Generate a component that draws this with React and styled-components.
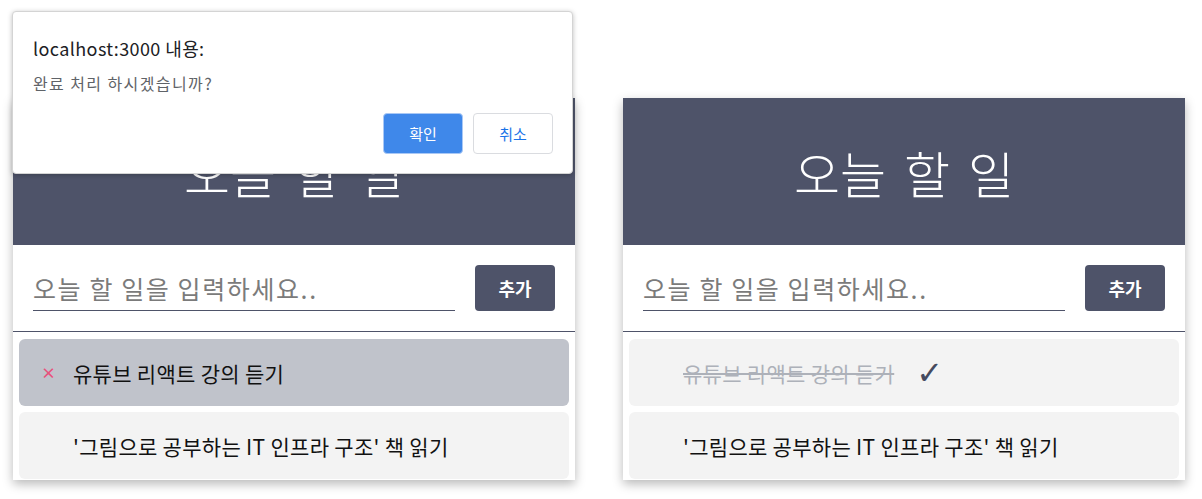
import React from 'react'
import styled, { createGlobalStyle } from 'styled-components'

const GlobalStyle = createGlobalStyle`
  body {
    margin: 0;
    background: #ffffff;
    font-family: "Noto Sans CJK KR", "Noto Sans", sans-serif;
  }
`;

const Page = styled.div`
  display: flex;
  align-items: flex-start;
  gap: 48px;
  padding: 98px 0 19px 13px;
`;

const Shot = styled.div`
  position: relative;
`;

const Card = styled.div`
  width: 562px;
  background: #ffffff;
  box-shadow: 0 4px 10px rgba(0, 0, 0, 0.28);
`;

const Header = styled.div`
  height: 147px;
  display: flex;
  align-items: center;
  justify-content: center;
  background: #4e5369;
  color: #ffffff;
  font-size: 50px;
  font-weight: 300;
  word-spacing: 7px;
`;

const Form = styled.form`
  display: flex;
  gap: 20px;
  padding: 20px;
  border-bottom: 1px solid #4e5369;
`;

const Input = styled.input`
  flex: 1;
  height: 46px;
  box-sizing: border-box;
  padding: 0;
  border: none;
  border-bottom: 1px solid #4e5369;
  outline: none;
  font-family: inherit;
  font-size: 25px;
  letter-spacing: 1.6px;
  color: #222;

  &::placeholder {
    color: #7b7b7b;
  }
`;

const AddButton = styled.button`
  width: 80px;
  height: 46px;
  border: none;
  border-radius: 4px;
  background: #4e5369;
  color: #ffffff;
  font-family: inherit;
  font-size: 18px;
  font-weight: 700;
`;

const List = styled.ul`
  list-style: none;
  margin: 0;
  box-sizing: border-box;
  height: 148px;
  overflow: hidden;
  padding: 7px 6px 0;
  display: flex;
  flex-direction: column;
  gap: 6px;
`;

const Item = styled.li`
  flex: none;
  height: 67px;
  display: flex;
  align-items: center;
  padding-left: 22px;
  border-radius: 6px;
  background: ${(p) => (p.$hover ? '#c0c3cb' : '#f3f3f3')};
`;

const Remove = styled.span`
  width: 32px;
  flex: none;
  color: #e8527c;
  font-size: 15px;
  font-weight: 700;
  line-height: 1;
`;

const Text = styled.span`
  font-size: 21px;
  letter-spacing: 0.3px;
  color: ${(p) => (p.$done ? '#adb1b9' : '#111111')};
  text-decoration: ${(p) => (p.$done ? 'line-through' : 'none')};
  text-decoration-thickness: 2px;
`;

const Check = styled.span`
  margin-left: 22px;
  font-family: "DejaVu Sans", sans-serif;
  font-size: 32px;
  color: #454a5e;
  line-height: 1;
`;

const Dialog = styled.div`
  position: absolute;
  top: -87px;
  left: -1px;
  width: 561px;
  box-sizing: border-box;
  padding: 23px 19px 19px 20px;
  background: #ffffff;
  border: 1px solid #d4d4d4;
  border-radius: 4px;
  box-shadow: 0 1px 5px rgba(0, 0, 0, 0.25);
`;

const DialogTitle = styled.div`
  font-size: 18px;
  letter-spacing: 0.4px;
  line-height: 26px;
  color: #202124;
`;

const DialogMessage = styled.div`
  margin-top: 12px;
  font-size: 16px;
  letter-spacing: 1.4px;
  line-height: 20px;
  color: #5f6368;
`;

const DialogActions = styled.div`
  display: flex;
  justify-content: flex-end;
  gap: 10px;
  margin-top: 20px;
`;

const DialogButton = styled.button`
  width: 80px;
  height: 41px;
  border-radius: 4px;
  font-family: inherit;
  font-size: 15px;
  border: 1px solid ${(p) => (p.$primary ? '#a9c8f5' : '#dadce0')};
  background: ${(p) => (p.$primary ? '#3f88ea' : '#ffffff')};
  color: ${(p) => (p.$primary ? '#ffffff' : '#1a73e8')};
`;

const TodoCard = ({ todos }) => (
  <Card>
    <Header>오늘 할 일</Header>
    <Form onSubmit={(e) => e.preventDefault()}>
      <Input placeholder="오늘 할 일을 입력하세요.." />
      <AddButton type="submit">추가</AddButton>
    </Form>
    <List>
      {todos.map((todo) => (
        <Item key={todo.id} $hover={todo.hover}>
          <Remove>{todo.hover ? '×' : ''}</Remove>
          <Text $done={todo.done}>{todo.text}</Text>
          {todo.done && <Check>✓</Check>}
        </Item>
      ))}
    </List>
  </Card>
);

const App = () => {
  const before = [
    { id: 1, text: '유튜브 리액트 강의 듣기', done: false, hover: true },
    { id: 2, text: "'그림으로 공부하는 IT 인프라 구조' 책 읽기", done: false },
  ];
  const after = [
    { id: 1, text: '유튜브 리액트 강의 듣기', done: true },
    { id: 2, text: "'그림으로 공부하는 IT 인프라 구조' 책 읽기", done: false },
  ];

  return (
    <>
      <GlobalStyle />
      <Page>
        <Shot>
          <TodoCard todos={before} />
          <Dialog>
            <DialogTitle>localhost:3000 내용:</DialogTitle>
            <DialogMessage>완료 처리 하시겠습니까?</DialogMessage>
            <DialogActions>
              <DialogButton $primary>확인</DialogButton>
              <DialogButton>취소</DialogButton>
            </DialogActions>
          </Dialog>
        </Shot>
        <Shot>
          <TodoCard todos={after} />
        </Shot>
      </Page>
    </>
  );
};

export default App;
